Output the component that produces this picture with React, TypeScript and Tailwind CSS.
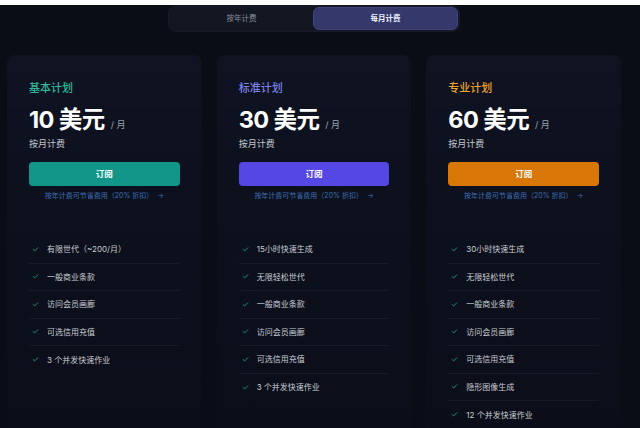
import { Check } from 'lucide-react';

interface Plan {
  name: string;
  price: number;
  titleClass: string;
  buttonClass: string;
  features: string[];
}

const PLANS: Plan[] = [
  {
    name: '基本计划',
    price: 10,
    titleClass: 'text-[#2fb99c]',
    buttonClass: 'bg-[#12968a] hover:bg-[#0f8479]',
    features: ['有限世代（~200/月）', '一般商业条款', '访问会员画廊', '可选信用充值', '3 个并发快速作业'],
  },
  {
    name: '标准计划',
    price: 30,
    titleClass: 'text-[#7d80e6]',
    buttonClass: 'bg-[#5447e3] hover:bg-[#4a3ed4]',
    features: ['15小时快速生成', '无限轻松世代', '一般商业条款', '访问会员画廊', '可选信用充值', '3 个并发快速作业'],
  },
  {
    name: '专业计划',
    price: 60,
    titleClass: 'text-[#eea52a]',
    buttonClass: 'bg-[#d77706] hover:bg-[#c26b05]',
    features: ['30小时快速生成', '无限轻松世代', '一般商业条款', '访问会员画廊', '可选信用充值', '隐形图像生成', '12 个并发快速作业'],
  },
];

function BillingToggle() {
  return (
    <div className="mx-auto mt-[5px] flex h-[27px] w-[292px] rounded-lg border border-[#171b27] bg-[#131722] p-[1px]">
      <button type="button" className="flex-1 rounded-md text-[7.5px] text-[#8a8f9c]">
        按年计费
      </button>
      <button
        type="button"
        className="flex-1 rounded-md border border-[#40447a] bg-[#34386a] text-[7.5px] font-semibold text-[#eef0ff]"
      >
        每月计费
      </button>
    </div>
  );
}

function PlanCard({ plan }: { plan: Plan }) {
  return (
    <div className="flex flex-col rounded-lg bg-gradient-to-b from-[#0f1322] via-[#0c101c] to-[#0b0e19] px-[22px] pb-8">
      <div className="pt-[26px] pb-[35px]">
        <h3 className={`text-[11px] leading-[14px] font-medium ${plan.titleClass}`}>{plan.name}</h3>
        <div className="mt-[12px] flex items-baseline gap-[6px] leading-[26px]">
          <span className="text-[23.5px] font-bold tracking-tight text-white">{plan.price} 美元</span>
          <span className="text-[9px] text-[#9ca3af]">/ 月</span>
        </div>
        <p className="text-[9px] leading-[12px] text-[#c3c6ce]">按月计费</p>
        <button
          type="button"
          className={`mt-[12px] h-[24px] w-full rounded-[4px] text-[8.5px] font-semibold text-white ${plan.buttonClass}`}
        >
          订阅
        </button>
        <p className="mt-[5px] text-center text-[7px] leading-[10px] text-[#3d6db0]">
          按年计费可节省费用（20% 折扣）<span className="ml-1">→</span>
        </p>
      </div>
      <ul className="flex flex-col">
        {plan.features.map((f, i) => (
          <li
            key={f}
            className={`flex h-[27.5px] items-center gap-[8px] pl-[3px] ${i < plan.features.length - 1 ? 'border-b border-[#161b28]' : ''}`}
          >
            <Check className="h-[7px] w-[7px] text-[#1fa584]" strokeWidth={3} />
            <span className="text-[8px] text-[#c9ccd3]">{f}</span>
          </li>
        ))}
      </ul>
    </div>
  );
}

export default function App() {
  return (
    <div
      className="min-h-screen bg-[#0a0d16]"
      style={{ fontFamily: 'Inter, "Noto Sans CJK SC", sans-serif' }}
    >
      <div className="w-[628px] px-[7px]">
        <BillingToggle />
        <div className="mt-[23px] grid grid-cols-3 gap-[15px]">
          {PLANS.map((p) => (
            <PlanCard key={p.name} plan={p} />
          ))}
        </div>
      </div>
    </div>
  );
}
